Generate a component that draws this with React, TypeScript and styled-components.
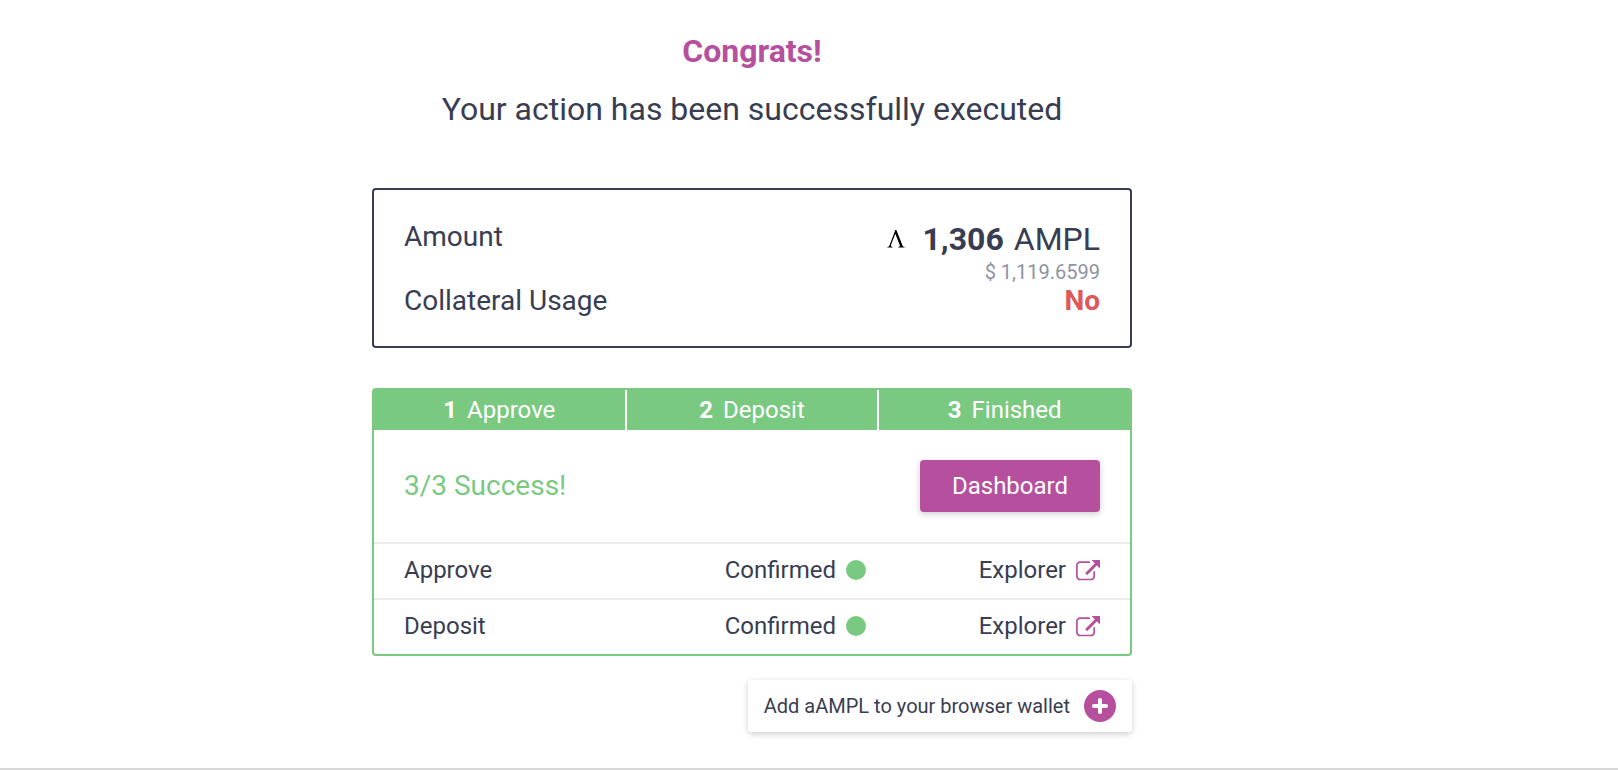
import React from "react";
import styled, { createGlobalStyle } from "styled-components";

const color = {
  ink: "#383d51",
  accent: "#b6509e",
  success: "#7ac981",
  danger: "#de5959",
  muted: "#8e92a3",
  line: "#ececec",
};

const GlobalStyle = createGlobalStyle`
  *, *::before, *::after { box-sizing: border-box; }
  body {
    margin: 0;
    background: #ffffff;
    color: ${color.ink};
    font-family: Roboto, "Liberation Sans", sans-serif;
  }
  h1, p, dl, dd, ol, ul { margin: 0; padding: 0; }
  ol, ul { list-style: none; }
`;

const Page = styled.div`
  display: flex;
  flex-direction: column;
  min-height: 100vh;
  border-bottom: 2px solid #d8d8d8;
`;

const Content = styled.main`
  width: 100%;
  max-width: 1504px;
  padding: 32px 24px 36px;
  display: flex;
  flex-direction: column;
  align-items: center;
`;

const Heading = styled.header`
  margin-bottom: 60px;
  display: flex;
  flex-direction: column;
  gap: 20px;
  font-size: 32px;
  line-height: 38px;
  text-align: center;
`;

const Title = styled.h1`
  color: ${color.accent};
  font-size: inherit;
  font-weight: 700;
`;

const Column = styled.div`
  width: 100%;
  max-width: 760px;
  display: flex;
  flex-direction: column;
`;

const Summary = styled.dl`
  margin-bottom: 40px;
  padding: 30px 30px 28px;
  border: 2px solid ${color.ink};
  border-radius: 4px;
  font-size: 28px;
  line-height: 34px;
`;

const SummaryRow = styled.div`
  display: flex;
  justify-content: space-between;
`;

const AmountValue = styled.dd`
  display: flex;
  flex-direction: column;
  align-items: flex-end;
  gap: 2px;
`;

const Token = styled.span`
  display: flex;
  align-items: center;
  font-size: 32px;
  line-height: 38px;

  svg { margin-right: 17px; }
  strong { margin-right: 10px; }
`;

const Fiat = styled.span`
  color: ${color.muted};
  font-size: 20px;
  line-height: 24px;
`;

const Usage = styled.dd`
  color: ${color.danger};
  font-weight: 700;
`;

const Progress = styled.section`
  border: 2px solid ${color.success};
  border-radius: 4px;
  font-size: 24px;
  line-height: 28px;
`;

const Steps = styled.ol`
  display: flex;
  background: ${color.success};
  color: #ffffff;
`;

const Step = styled.li`
  flex: 1;
  padding: 6px 0;
  display: flex;
  justify-content: center;
  gap: 10px;

  &:not(:last-child) { border-right: 2px solid #ffffff; }
`;

const Result = styled.div`
  padding: 30px;
  display: flex;
  align-items: center;
  justify-content: space-between;
`;

const Status = styled.p`
  color: ${color.success};
  font-size: 28px;
  line-height: 34px;
`;

const PrimaryButton = styled.button`
  min-width: 180px;
  height: 52px;
  padding: 0 20px;
  border: 0;
  border-radius: 4px;
  background: ${color.accent};
  box-shadow: 0 2px 6px rgba(0, 0, 0, 0.2);
  color: #ffffff;
  font: inherit;
  cursor: pointer;
`;

const Transaction = styled.li`
  height: 56px;
  padding: 0 30px 2px;
  border-top: 2px solid ${color.line};
  display: grid;
  grid-template-columns: 1fr auto 234px;
  align-items: center;
`;

const Confirmation = styled.span`
  display: flex;
  align-items: center;
  gap: 10px;
`;

const Dot = styled.span`
  width: 20px;
  height: 20px;
  border-radius: 50%;
  background: ${color.success};
`;

const ExplorerLink = styled.a`
  justify-self: end;
  display: flex;
  align-items: center;
  gap: 10px;
  color: inherit;
  text-decoration: none;
`;

const WalletButton = styled.button`
  align-self: flex-end;
  height: 52px;
  margin-top: 24px;
  padding: 0 16px;
  display: flex;
  align-items: center;
  gap: 14px;
  border: 0;
  border-radius: 4px;
  background: #ffffff;
  box-shadow: 0 2px 6px rgba(0, 0, 0, 0.2);
  color: inherit;
  font: inherit;
  font-size: 20px;
  line-height: 24px;
  cursor: pointer;
`;

const AmplIcon = () => (
  <svg width="18" height="18" viewBox="0 0 18 18" aria-hidden="true">
    <path
      d="M8.3 0h1.1l6 15.2c.4 1.1.9 1.6 2.2 1.7v.6h-6.4v-.6c1.6-.1 2-.5 1.5-1.8L8.3 3.7 4.1 14.8c-.5 1.4 0 2 1.5 2.1v.6H.3v-.6c1.3-.2 1.9-.8 2.4-2L8.3 0z"
      fill="#000000"
    />
  </svg>
);

const ExternalIcon = () => (
  <svg width="24" height="21" viewBox="0 0 24 21" fill="none" aria-hidden="true">
    <path
      d="M13.2 2.2H4.2A3.3 3.3 0 0 0 .9 5.5v10.7a3.3 3.3 0 0 0 3.3 3.3h10.7a3.3 3.3 0 0 0 3.3-3.3v-4.4"
      stroke={color.accent}
      strokeWidth="1.7"
      strokeLinecap="round"
    />
    <path d="M11 13.2 20 4.2" stroke={color.accent} strokeWidth="3" strokeLinecap="round" />
    <path d="M15.5 0H24v8.5z" fill={color.accent} />
  </svg>
);

const PlusIcon = () => (
  <svg width="32" height="32" viewBox="0 0 32 32" aria-hidden="true">
    <circle cx="16" cy="16" r="16" fill={color.accent} />
    <path d="M16 10v12M10 16h12" stroke="#ffffff" strokeWidth="4" strokeLinecap="round" />
  </svg>
);

const steps = ["Approve", "Deposit", "Finished"];
const transactions = ["Approve", "Deposit"];

export default function App() {
  return (
    <Page>
      <GlobalStyle />
      <Content>
        <Heading>
          <Title>Congrats!</Title>
          <p>Your action has been successfully executed</p>
        </Heading>
        <Column>
          <Summary>
            <SummaryRow>
              <dt>Amount</dt>
              <AmountValue>
                <Token>
                  <AmplIcon />
                  <strong>1,306</strong>
                  <span>AMPL</span>
                </Token>
                <Fiat>$ 1,119.6599</Fiat>
              </AmountValue>
            </SummaryRow>
            <SummaryRow>
              <dt>Collateral Usage</dt>
              <Usage>No</Usage>
            </SummaryRow>
          </Summary>
          <Progress>
            <Steps>
              {steps.map((name, i) => (
                <Step key={name}>
                  <strong>{i + 1}</strong>
                  <span>{name}</span>
                </Step>
              ))}
            </Steps>
            <Result>
              <Status>3/3 Success!</Status>
              <PrimaryButton type="button">Dashboard</PrimaryButton>
            </Result>
            <ul>
              {transactions.map((name) => (
                <Transaction key={name}>
                  <span>{name}</span>
                  <Confirmation>
                    Confirmed
                    <Dot />
                  </Confirmation>
                  <ExplorerLink href="#">
                    Explorer
                    <ExternalIcon />
                  </ExplorerLink>
                </Transaction>
              ))}
            </ul>
          </Progress>
          <WalletButton type="button">
            Add aAMPL to your browser wallet
            <PlusIcon />
          </WalletButton>
        </Column>
      </Content>
    </Page>
  );
}
